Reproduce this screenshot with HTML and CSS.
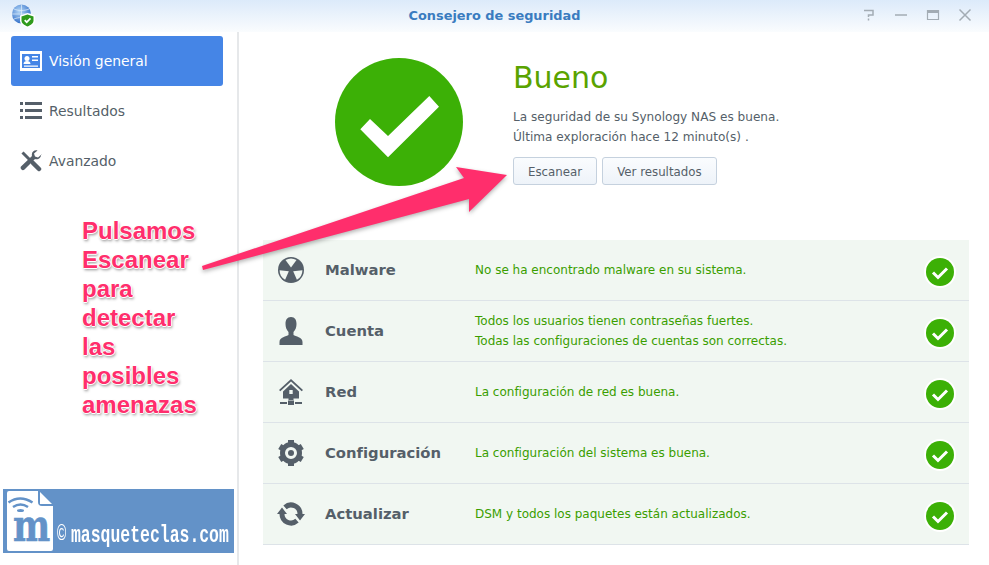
FILE: index.html
```html
<!DOCTYPE html>
<html lang="es">
<head>
    <meta charset="UTF-8">
    <title>Consejero de seguridad</title>
    <link rel="stylesheet" href="styles.css">
</head>
<body>
    <div class="app">
        <header class="titlebar">
            <svg class="app-icon" viewBox="0 0 24 24" width="24" height="24">
                <defs>
                    <radialGradient id="globe" cx=".4" cy=".35" r=".7">
                        <stop offset="0" stop-color="#b5d8f8"/>
                        <stop offset="1" stop-color="#2a68c4"/>
                    </radialGradient>
                </defs>
                <circle cx="9.500" cy="10" r="9.500" fill="url(#globe)"/>
                <path d="M9.500 .5v19M0 10h19M2 5c5 2 10 2 15 0M2 15c5-2 10-2 15 0" stroke="#e2effb" stroke-width=".7" fill="none"/>
                <path d="M15.500 9l7.500 2.500v5c0 3.500-3.200 5.800-7.500 7.500-4.300-1.700-7.500-4-7.500-7.500v-5z" fill="#fff"/>
                <path d="M15.500 10.500l6 1.900v4.100c0 2.800-2.600 4.600-6 6-3.400-1.400-6-3.200-6-6v-4.100z" fill="#2f9a1c"/>
                <path d="M12.700 16.200l2 2 3.800-3.800" stroke="#fff" stroke-width="1.700" fill="none"/>
            </svg>
            <span class="titlebar-name">Consejero de seguridad</span>
            <div class="window-buttons">
                <svg viewBox="0 0 14 14" width="14" height="14"><path d="M2 2.500h9v4.500h-4.500v2M6.500 10.500v2" stroke="#a3acb4" stroke-width="1.500" fill="none"/></svg>
                <svg viewBox="0 0 14 14" width="14" height="14"><path d="M1 7h12" stroke="#a3acb4" stroke-width="1.500"/></svg>
                <svg viewBox="0 0 14 14" width="14" height="14"><path d="M1.500 2.500h11v9h-11z" stroke="#a3acb4" stroke-width="1.200" fill="none"/><path d="M1 2h12v3h-12z" fill="#a3acb4"/></svg>
                <svg viewBox="0 0 14 14" width="14" height="14"><path d="M1.500 1.500l11 11M12.500 1.500l-11 11" stroke="#a3acb4" stroke-width="1.500"/></svg>
            </div>
        </header>

        <div class="main">
            <aside class="sidebar">
                <a class="nav-item active">
                    <svg viewBox="0 0 22 20" width="22" height="20">
                        <path fill-rule="evenodd" d="M0 0h22v20h-22zM2 3v14h18v-14z" fill="#fff"/>
                        <circle cx="7" cy="7.500" r="2.500" fill="#fff"/>
                        <path d="M3.500 13c0-2 1.500-3 3.500-3s3.500 1 3.500 3zM12 5h6v1.500h-6zM12 8.500h6v1.500h-6zM4 14.500h14v1.300h-14z" fill="#fff"/>
                    </svg>
                    Visión general
                </a>
                <a class="nav-item">
                    <svg viewBox="0 0 22 18" width="22" height="18">
                        <path d="M0 0h3v3h-3zM5 0h17v3h-17zM0 7h3v3h-3zM5 7h17v3h-17zM0 14h3v3h-3zM5 14h17v3h-17z" fill="#555f69"/>
                    </svg>
                    Resultados
                </a>
                <a class="nav-item">
                    <svg viewBox="0 0 22 22" width="22" height="22">
                        <path d="M2.500 2.500l8.500 8.500" stroke="#555f69" stroke-width="3" fill="none"/>
                        <path d="M13 13l6 6" stroke="#555f69" stroke-width="4.500" stroke-linecap="round" fill="none"/>
                        <path d="M21.500 4.500l-3.500 3-3-1-1-3 3.500-3c-3.500-.8-6.500 2-5.500 5.500l-10.500 10a2.300 2.300 0 0 0 3 3.500l10.500-10.500c3.500 1 6.500-1.800 6-5z" fill="#555f69"/>
                    </svg>
                    Avanzado
                </a>
                <div class="brand">
                    <svg class="brand-file" viewBox="0 0 46 60" width="46" height="60">
                        <path d="M2 0h29v11q0 4 4 4h11v43q0 2-2 2h-42q-2 0-2-2v-56q0-2 2-2z" fill="#fff"/>
                        <path d="M33 1l12 12h-12z" fill="#fff"/>
                        <path d="M1.500 11.500q11.500-8 24 0M6 16q7.500-5 15 0" stroke="#6392c8" stroke-width="2.500" fill="none"/>
                        <ellipse cx="13.500" cy="19.500" rx="3.500" ry="1.500" fill="#6392c8"/>
                        <text class="brand-m" transform="translate(6 50) scale(.95 1.2)">m</text>
                    </svg>
                    <span class="brand-copy">©</span>
                    <span class="brand-name">masqueteclas.com</span>
                </div>
            </aside>

            <section class="content">
                <div class="hero">
                    <svg class="hero-badge" viewBox="0 0 128 128" width="128" height="128">
                        <circle cx="64" cy="64" r="64" fill="#3cb006"/>
                        <path d="M94.300 38l9.700 10.700-51 50.600-27.700-28 9.700-10.300 18 17z" fill="#fff"/>
                    </svg>
                    <div class="hero-text">
                        <h1>Bueno</h1>
                        <p>La seguridad de su Synology NAS es buena.</p>
                        <p>Última exploración hace 12 minuto(s) .</p>
                        <div class="hero-actions">
                            <button>Escanear</button>
                            <button>Ver resultados</button>
                        </div>
                    </div>
                </div>

                <div class="checks">
                    <div class="check-row">
                        <svg class="row-icon" viewBox="0 0 26 26" width="26" height="26">
                            <circle cx="13" cy="13" r="13" fill="#555f69"/>
                            <path d="M13 10.500l-5.500-7.500a11 11 0 0 1 11 0z" fill="#f1f7f2"/>
                            <path d="M13 10.500l-5.500-7.500a11 11 0 0 1 11 0z" fill="#f1f7f2" transform="rotate(120 13 13)"/>
                            <path d="M13 10.500l-5.500-7.500a11 11 0 0 1 11 0z" fill="#f1f7f2" transform="rotate(240 13 13)"/>
                        </svg>
                        <b class="row-label">Malware</b>
                        <div class="row-msg">No se ha encontrado malware en su sistema.</div>
                        <span class="ok"><svg viewBox="0 0 28 28" width="28" height="28"><circle cx="14" cy="14" r="14" fill="#3cb006"/><path d="M7 14.500l5 5 9-9" stroke="#fff" stroke-width="3" fill="none"/></svg></span>
                    </div>
                    <div class="check-row">
                        <svg class="row-icon" viewBox="0 0 24 28" width="24" height="28">
                            <path d="M12 0c4 0 5.500 3 5.500 7 0 3-1 6-3 8v3c2 1.500 9 2 9 7v3h-23v-3c0-5 7-5.500 9-7v-3c-2-2-3-5-3-8 0-4 1.500-7 5.500-7z" fill="#555f69"/>
                        </svg>
                        <b class="row-label">Cuenta</b>
                        <div class="row-msg">
                            <div>Todos los usuarios tienen contraseñas fuertes.</div>
                            <div>Todas las configuraciones de cuentas son correctas.</div>
                        </div>
                        <span class="ok"><svg viewBox="0 0 28 28" width="28" height="28"><circle cx="14" cy="14" r="14" fill="#3cb006"/><path d="M7 14.500l5 5 9-9" stroke="#fff" stroke-width="3" fill="none"/></svg></span>
                    </div>
                    <div class="check-row">
                        <svg class="row-icon" viewBox="0 0 24 26" width="24" height="26">
                            <path d="M12 0l12 11-1.300 1.300-10.700-9.800-10.700 9.800-1.300-1.300z" fill="#555f69"/>
                            <path d="M12 5l8 7.500v7h-5.500v1.500h-5v-1.500h-5.500v-7zM10.300 11v4h3.400v-4z" fill="#555f69" fill-rule="evenodd"/>
                            <path d="M1 23h7v2h-7zM16 23h7v2h-7zM9 21.500h6v4.500h-6z" fill="#555f69"/>
                        </svg>
                        <b class="row-label">Red</b>
                        <div class="row-msg">La configuración de red es buena.</div>
                        <span class="ok"><svg viewBox="0 0 28 28" width="28" height="28"><circle cx="14" cy="14" r="14" fill="#3cb006"/><path d="M7 14.500l5 5 9-9" stroke="#fff" stroke-width="3" fill="none"/></svg></span>
                    </div>
                    <div class="check-row">
                        <svg class="row-icon" viewBox="0 0 26 26" width="26" height="26">
                            <circle cx="13" cy="13" r="8.500" fill="none" stroke="#555f69" stroke-width="5"/>
                            <circle cx="13" cy="13" r="3" fill="#555f69"/>
                            <path d="M10 0h6v5h-6zM10 21h6v5h-6z" fill="#555f69"/>
                            <path d="M10 0h6v5h-6zM10 21h6v5h-6z" fill="#555f69" transform="rotate(60 13 13)"/>
                            <path d="M10 0h6v5h-6zM10 21h6v5h-6z" fill="#555f69" transform="rotate(120 13 13)"/>
                        </svg>
                        <b class="row-label">Configuración</b>
                        <div class="row-msg">La configuración del sistema es buena.</div>
                        <span class="ok"><svg viewBox="0 0 28 28" width="28" height="28"><circle cx="14" cy="14" r="14" fill="#3cb006"/><path d="M7 14.500l5 5 9-9" stroke="#fff" stroke-width="3" fill="none"/></svg></span>
                    </div>
                    <div class="check-row">
                        <svg class="row-icon" viewBox="0 0 30 24" width="30" height="24">
                            <path d="M9 5.300a9 9 0 0 1 15 6.700" fill="none" stroke="#555f69" stroke-width="5"/>
                            <path d="M21 18.700a9 9 0 0 1-15-6.700" fill="none" stroke="#555f69" stroke-width="5"/>
                            <path d="M1 12h10l-5-6.500zM19 12h10l-5 6.500z" fill="#555f69"/>
                        </svg>
                        <b class="row-label">Actualizar</b>
                        <div class="row-msg">DSM y todos los paquetes están actualizados.</div>
                        <span class="ok"><svg viewBox="0 0 28 28" width="28" height="28"><circle cx="14" cy="14" r="14" fill="#3cb006"/><path d="M7 14.500l5 5 9-9" stroke="#fff" stroke-width="3" fill="none"/></svg></span>
                    </div>
                </div>
            </section>
        </div>
    </div>

    <!-- annotation on top of the screenshot -->
    <div class="note">Pulsamos<br>Escanear<br>para<br>detectar<br>las<br>posibles<br>amenazas</div>
    <svg class="arrow" viewBox="0 0 989 565" width="989" height="565">
        <path d="M202 266l262-88-8-11 51 8-38 37 0-13-266 71z" fill="#ff2e6c"/>
    </svg>
</body>
</html>
```

FILE: styles.css
```css
* {
    box-sizing: border-box;
}
html, body {
    margin: 0;
    padding: 0;
    height: 100%;
    overflow: hidden;
}
body {
    font-family: "DejaVu Sans", Verdana, sans-serif;
    background: #fff;
    color: #555f69;
}
.app {
    height: 565px;
    display: flex;
    flex-direction: column;
}
.titlebar {
    height: 32px;
    flex: none;
    position: relative;
    display: flex;
    align-items: center;
    justify-content: center;
    background: linear-gradient(#dceafa, #fafcfe);
}
.app-icon {
    position: absolute;
    left: 12px;
    top: 4px;
}
.titlebar-name {
    font-size: 12.9px;
    font-weight: bold;
    color: #3a7cc0;
    margin-top: -2px;
}
.window-buttons {
    position: absolute;
    right: 17px;
    top: 8px;
    display: flex;
    gap: 18px;
}
.main {
    flex: 1;
    display: flex;
    min-height: 0;
}
.sidebar {
    width: 239px;
    flex: none;
    padding: 4px 14px 12px 11px;
    border-right: 2px solid #e6e8ea;
    display: flex;
    flex-direction: column;
    position: relative;
}
.nav-item {
    height: 50px;
    display: flex;
    align-items: center;
    gap: 7px;
    padding-left: 9px;
    font-size: 13.9px;
    color: #555f69;
    border-radius: 3px;
}
.nav-item.active {
    background: #4585e6;
    color: #fff;
}
.brand {
    margin: auto 0 0 -8px;
    height: 64px;
    width: 231px;
    flex: none;
    background: #6392c8;
    display: flex;
    align-items: flex-end;
    padding: 1px 0 2px 4px;
    color: #fff;
}
.brand-file {
    flex: none;
    overflow: visible;
}
.brand-m {
    font-family: "DejaVu Serif", serif;
    font-weight: bold;
    font-size: 37px;
    fill: #6392c8;
    stroke: #6392c8;
    stroke-width: .5px;
}
.brand-copy {
    font-family: "Liberation Mono", monospace;
    font-size: 22px;
    line-height: 22px;
    margin: 0 0 4px 4px;
    flex: none;
    width: 13px;
    transform: scaleX(.7);
    transform-origin: left bottom;
}
.brand-name {
    font-family: "Liberation Mono", monospace;
    font-weight: bold;
    font-size: 24px;
    line-height: 24px;
    flex: none;
    margin: 0 0 3px 1px;
    white-space: nowrap;
    transform: scaleX(.685);
    transform-origin: left bottom;
}
.content {
    flex: 1;
    padding: 0 20px 0 24px;
}
.hero {
    height: 208px;
    display: flex;
    padding: 26px 0 0 72px;
}
.hero-badge {
    flex: none;
}
.hero-text {
    margin-left: 50px;
}
.hero-text h1 {
    margin: 0 0 9px;
    font-weight: normal;
    font-size: 30px;
    line-height: 40px;
    color: #5aa300;
}
.hero-text p {
    margin: 0;
    font-size: 12.1px;
    line-height: 20px;
    color: #555f69;
}
.hero-actions {
    display: flex;
    gap: 5px;
    margin-top: 10px;
}
.hero-actions button {
    height: 28px;
    padding: 1px 14px 0;
    font: 11.8px "DejaVu Sans", sans-serif;
    color: #555f69;
    background: linear-gradient(#fafcfe, #eef3f9);
    border: 1px solid #c5d1de;
    border-radius: 3px;
}
.check-row {
    height: 61px;
    display: flex;
    align-items: center;
    background: #f1f7f2;
    border-bottom: 1px solid #dde3e8;
}
.row-icon {
    flex: none;
    margin-left: 28px;
    transform: translateX(-50%);
}
.row-label {
    position: absolute;
    margin: -2px 0 0 62px;
    font-size: 14.8px;
    color: #555f69;
}
.row-msg {
    margin-left: 212px;
    position: absolute;
    font-size: 12px;
    line-height: 20px;
    color: #3a9e00;
}
.ok {
    margin: 3px 13px 0 auto;
    width: 32px;
    height: 32px;
    border-radius: 50%;
    background: #fff;
    padding: 2px;
    display: flex;
}
.note {
    position: absolute;
    left: 82px;
    top: 216px;
    font: bold 24px/29px "Liberation Sans", Arial, sans-serif;
    color: #ff2e6c;
    text-shadow: 1px 0 #fff, -1px 0 #fff, 0 1px #fff, 0 -1px #fff, 1px 2px 3px rgba(0, 0, 0, .45);
}
.arrow {
    position: absolute;
    left: 0;
    top: 0;
    pointer-events: none;
    filter: drop-shadow(0 2px 2px rgba(0, 0, 0, .3));
}
```
